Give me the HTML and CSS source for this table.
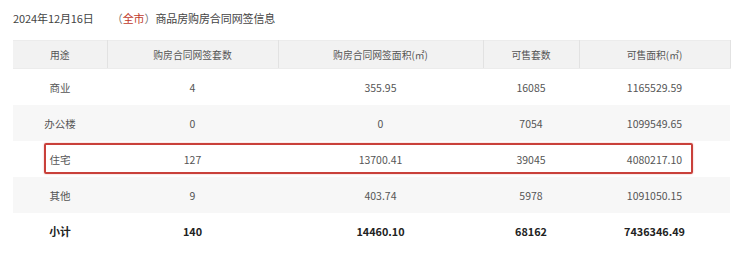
FILE: index.html
```html
<!DOCTYPE html>
<html lang="zh-CN">
<head>
<meta charset="utf-8">
<link rel="stylesheet" href="styles.css">
</head>
<body>
<div class="page">
  <div class="title">2024年12月16日<span class="gap"></span><span class="paren">（</span><span class="city">全市</span><span class="paren">）</span>商品房购房合同网签信息</div>
  <div class="wrap">
    <table class="tbl">
      <colgroup>
        <col class="c1"><col class="c2"><col class="c3"><col class="c4"><col class="c5">
      </colgroup>
      <thead>
        <tr><th>用途</th><th>购房合同网签套数</th><th>购房合同网签面积(㎡)</th><th>可售套数</th><th>可售面积(㎡)</th></tr>
      </thead>
      <tbody>
        <tr><td>商业</td><td>4</td><td>355.95</td><td>16085</td><td>1165529.59</td></tr>
        <tr class="alt"><td>办公楼</td><td>0</td><td>0</td><td>7054</td><td>1099549.65</td></tr>
        <tr><td>住宅</td><td>127</td><td>13700.41</td><td>39045</td><td>4080217.10</td></tr>
        <tr class="alt"><td>其他</td><td>9</td><td>403.74</td><td>5978</td><td>1091050.15</td></tr>
        <tr class="total"><td>小计</td><td>140</td><td>14460.10</td><td>68162</td><td>7436346.49</td></tr>
      </tbody>
    </table>
    <div class="mark"></div>
  </div>
</div>
</body>
</html>
```
FILE: styles.css
```css
html, body {
  margin: 0;
  padding: 0;
  background: #ffffff;
}
.page {
  padding: 10px 12px 0 13px;
  font-family: "Noto Sans CJK SC", "Noto Sans", sans-serif;
  color: #555;
}
.title {
  font-size: 11px;
  line-height: 16px;
  color: #444;
  height: 16px;
  letter-spacing: -0.1px;
}
.gap {
  display: inline-block;
  width: 18px;
}
.paren {
  color: #777;
}
.city {
  color: #c0392b;
}
.wrap {
  position: relative;
  margin-top: 14px;
  width: 717px;
}
.tbl {
  width: 717px;
  border-collapse: collapse;
  table-layout: fixed;
}
.c1 { width: 94px; }
.c2 { width: 171px; }
.c3 { width: 205px; }
.c4 { width: 96px; }
.c5 { width: 151px; }
.tbl th {
  height: 27px;
  padding: 0;
  background: #f2f2f2;
  font-weight: normal;
  font-size: 9.8px;
  color: #555;
  border-right: 1px solid #e2e2e2;
  border-top: 1px solid #ececec;
  border-bottom: 1px solid #ececec;
}
.tbl td {
  height: 36px;
  padding: 0;
  text-align: center;
  font-size: 10.5px;
  color: #555;
}
.tbl tr.alt td {
  background: #f7f7f7;
}
.tbl tr.total td {
  font-weight: bold;
  color: #222;
  font-size: 10.8px;
}
.mark {
  position: absolute;
  left: 31px;
  top: 103px;
  width: 645px;
  height: 27px;
  border: 2px solid #c9403a;
  border-radius: 2px;
  box-shadow: 0 0 2px rgba(200, 60, 50, 0.4);
}
```
